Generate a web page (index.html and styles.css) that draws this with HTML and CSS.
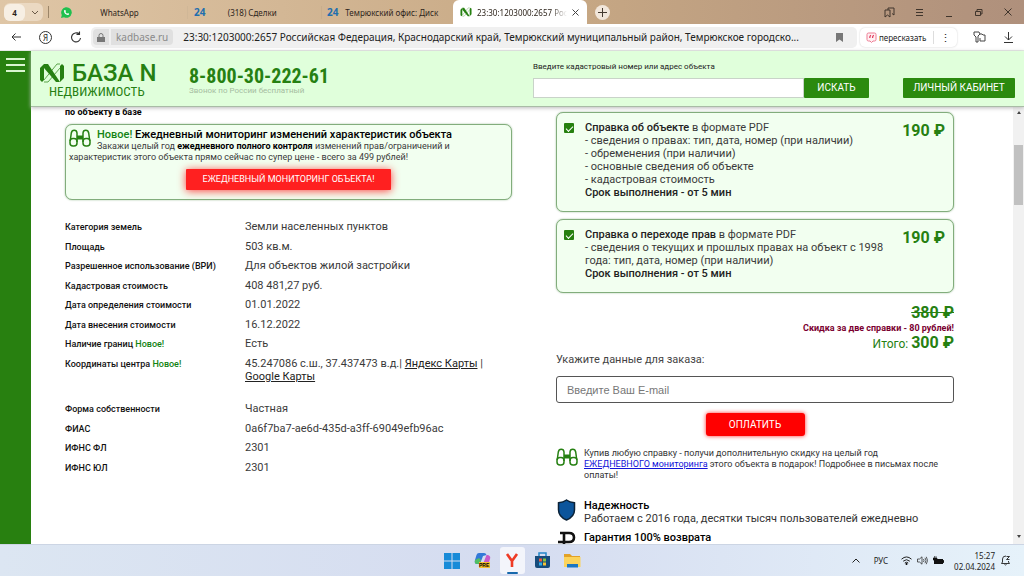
FILE: index.html
```html
<!DOCTYPE html>
<html lang="ru">
<head>
<meta charset="utf-8">
<title>23:30:1203000:2657</title>
<link rel="stylesheet" href="styles.css">
</head>
<body>
<svg width="0" height="0" class="defs" aria-hidden="true">
  <symbol id="binoculars" viewBox="0 0 22 18">
    <g fill="none" stroke="#268012" stroke-width="1.500">
      <path d="M1.200 12L2.300 4Q2.800 1.200 5.200 1.200Q7.800 1.200 8 4V13M20.800 12L19.700 4Q19.200 1.200 16.800 1.200Q14.200 1.200 14 4V13"/>
      <rect x="1" y="9.500" width="7" height="7.500" rx="3"/><rect x="14" y="9.500" width="7" height="7.500" rx="3"/>
    </g>
    <path d="M8 6.500h6v4H8z" fill="#268012"/>
  </symbol>
  <symbol id="mark" viewBox="0 0 26 20">
    <path d="M1 5L5 1v16l-2 2-2-2zM25 15l-4 4V3l2-2 2 2z" fill="#268012"/>
    <path d="M5 1h4l12 18h-4L5 5z" fill="#268012"/>
    <path d="M5 17L18 1h3M9 19L21 5M5 19h4" stroke="#268012" fill="none" stroke-width=".7"/>
  </symbol>
</svg>

<nav class="tabs">
  <div class="group"><span class="count">4</span><svg width="8" height="5" viewBox="0 0 8 5"><path d="M1 1l3 3 3-3" fill="none" stroke="#6a5a48"/></svg></div>
  <span class="bar"></span>
  <div class="tab tab-wa">
    <svg width="11" height="11" viewBox="0 0 11 11"><path d="M0 11l.8-3A5.300 5.300 0 1 1 3 10.200z" fill="#1fc04f"/><path d="M3.400 3l1 .1.500 1.300-.5.600q.6 1.200 1.800 1.700l.7-.7 1.200.7q0 1.200-1.300 1.300Q3.200 7.300 3 4z" fill="#fff"/></svg>
    <span class="name">WhatsApp</span>
  </div>
  <div class="tab tab-deals"><b class="b24">24</b><span class="name">(318) Сделки</span></div>
  <div class="tab tab-office"><b class="b24">24</b><span class="name">Темрюкский офис: Диск</span></div>
  <div class="tab active">
    <svg width="12" height="10"><use href="#mark"/></svg>
    <span class="title">23:30:1203000:2657 Росс</span>
    <svg width="7" height="7" viewBox="0 0 7 7"><path d="M.5.5l6 6m0-6l-6 6" stroke="#444"/></svg>
  </div>
  <button class="plus" aria-label="Новая вкладка"><svg width="9" height="9" viewBox="0 0 9 9"><path d="M4.500 0v9M0 4.500h9" stroke="#443a30"/></svg></button>
  <div class="win">
    <svg width="11" height="11" viewBox="0 0 11 11"><path d="M1 3h5v7L3.500 8 1 10zM4 3V1h6v7L8 6.500" fill="none" stroke="#40352c"/></svg>
    <svg width="8" height="9" viewBox="0 0 8 9"><path d="M0 1.500h7M0 4.500h7M0 7.500h7" stroke="#40352c"/></svg>
    <svg width="8" height="9" viewBox="0 0 8 9"><path d="M1 8.500h6" stroke="#40352c"/></svg>
    <svg width="9" height="9" viewBox="0 0 9 9"><path d="M1.500 3.500h5v4h-5zM3 3V1.500h5V6H7" fill="none" stroke="#40352c"/></svg>
    <svg width="8" height="8" viewBox="0 0 8 8"><path d="M.5.5l7 7m0-7l-7 7" stroke="#40352c"/></svg>
  </div>
</nav>

<div class="toolbar">
  <div class="navs">
    <svg width="10" height="8" viewBox="0 0 10 8"><path d="M10 4H1M4.500.5L1 4l3.500 3.500" fill="none" stroke="#333"/></svg>
    <span class="ya">Я</span>
    <svg width="12" height="12" viewBox="0 0 12 12"><path d="M10.500 7A4.500 4.500 0 1 1 9 3L7.500 1.500M9.500.5v3h-3" fill="none" stroke="#333" stroke-width="1.100"/></svg>
  </div>
  <div class="address">
    <span class="lock"><svg width="8" height="9" viewBox="0 0 8 9"><path d="M0 4h8v5H0z" fill="#777"/><path d="M2 4V2.500a2 2 0 0 1 4 0V4" fill="none" stroke="#777"/></svg></span>
    <span class="host">kadbase.ru</span>
    <span class="url">23:30:1203000:2657 Российская Федерация, Краснодарский край, Темрюкский муниципальный район, Темрюкское городско...</span>
    <svg width="7" height="9" viewBox="0 0 7 9"><path d="M0 0h7v9L3.500 6.500 0 9z" fill="#777"/></svg>
  </div>
  <button class="retell"><svg width="11" height="11" viewBox="0 0 11 11"><path d="M2.500 1h6Q10 1 10 2.500v5Q10 9 8.500 9H7l-1.500 1.500L4 9H2.500Q1 9 1 7.500v-5Q1 1 2.500 1z" fill="#fff0f3" stroke="#ee7d94"/><path d="M5 3.200Q3.600 4 3.800 6M7.800 3.200Q6.400 4 6.600 6" stroke="#df3355" stroke-width="1.200" fill="none"/></svg>пересказать<span class="dots">⋮</span></button>
  <div class="tools">
    <svg width="13" height="12" viewBox="0 0 13 12"><path d="M1 1h5l1 2-2 2v6H3V6L1 4zM7 3h2l1 1h2v6H7V7" fill="none" stroke="#444"/></svg>
    <svg width="9" height="11" viewBox="0 0 9 11"><path d="M4.500 0v8M1 4.500L4.500 8 8 4.500M0 10.500h9" fill="none" stroke="#333"/></svg>
  </div>
</div>

<div class="page">
  <aside class="side"><button class="burger" aria-label="Меню"><i></i><i></i><i></i></button></aside>
  <div class="site">
    <header class="header">
      <a class="logo" href="#"><span class="brand"><svg width="26" height="20"><use href="#mark"/></svg>БАЗА N</span><span class="sub">НЕДВИЖИМОСТЬ</span></a>
      <div class="phone"><strong>8-800-30-222-61</strong><small>Звонок по России бесплатный</small></div>
      <form class="search">
        <label for="q">Введите кадастровый номер или адрес объекта</label>
        <div class="search-row"><input id="q" type="text"><button type="button" class="green find">ИСКАТЬ</button></div>
      </form>
      <button class="green cabinet">ЛИЧНЫЙ КАБИНЕТ</button>
    </header>
    <div class="body">
      <main class="content">
        <section class="left">
          <p class="lead">по объекту в базе</p>
          <div class="card promo">
            <svg class="bino" width="22" height="18"><use href="#binoculars"/></svg>
            <h2><span class="new">Новое!</span> Ежедневный мониторинг изменений характеристик объекта</h2>
            <p>Закажи целый год <b>ежедневного полного контроля</b> изменений прав/ограничений и характеристик этого объекта прямо сейчас по супер цене - всего за 499 рублей!</p>
            <button class="red monitor">ЕЖЕДНЕВНЫЙ МОНИТОРИНГ ОБЪЕКТА!</button>
          </div>
          <table class="facts">
            <tr><th>Категория земель</th><td>Земли населенных пунктов</td></tr>
            <tr><th>Площадь</th><td>503 кв.м.</td></tr>
            <tr><th>Разрешенное использование (ВРИ)</th><td>Для объектов жилой застройки</td></tr>
            <tr><th>Кадастровая стоимость</th><td>408 481,27 руб.</td></tr>
            <tr><th>Дата определения стоимости</th><td>01.01.2022</td></tr>
            <tr><th>Дата внесения стоимости</th><td>16.12.2022</td></tr>
            <tr><th>Наличие границ <span class="new">Новое!</span></th><td>Есть</td></tr>
            <tr><th>Координаты центра <span class="new">Новое!</span></th><td>45.247086 с.ш., 37.437473 в.д.| <a href="#">Яндекс Карты</a> |<br><a href="#">Google Карты</a></td></tr>
          </table>
          <table class="facts">
            <tr><th>Форма собственности</th><td>Частная</td></tr>
            <tr><th>ФИАС</th><td>0a6f7ba7-ae6d-435d-a3ff-69049efb96ac</td></tr>
            <tr><th>ИФНС ФЛ</th><td>2301</td></tr>
            <tr><th>ИФНС ЮЛ</th><td>2301</td></tr>
          </table>
        </section>
        <section class="right">
          <label class="card report">
            <input type="checkbox" checked>
            <span class="desc"><b>Справка об объекте</b> в формате PDF<br>- сведения о правах: тип, дата, номер (при наличии)<br>- обременения (при наличии)<br>- основные сведения об объекте<br>- кадастровая стоимость<br><b>Срок выполнения - от 5 мин</b></span>
            <span class="price">190 ₽</span>
          </label>
          <label class="card report">
            <input type="checkbox" checked>
            <span class="desc"><b>Справка о переходе прав</b> в формате PDF<br>- сведения о текущих и прошлых правах на объект с 1998 года: тип, дата, номер (при наличии)<br><b>Срок выполнения - от 5 мин</b></span>
            <span class="price">190 ₽</span>
          </label>
          <div class="total">
            <s>380 ₽</s>
            <span class="discount">Скидка за две справки - 80 рублей!</span>
            <span class="sum">Итого: <b>300 ₽</b></span>
          </div>
          <label class="order" for="mail">Укажите данные для заказа:</label>
          <input id="mail" class="mail" type="email" placeholder="Введите Ваш E-mail">
          <button class="red pay">ОПЛАТИТЬ</button>
          <div class="note gift">
            <svg width="22" height="18"><use href="#binoculars"/></svg>
            <p>Купив любую справку - получи дополнительную скидку на целый год<br><a href="#">ЕЖЕДНЕВНОГО мониторинга</a> этого объекта в подарок! Подробнее в письмах после<br>оплаты!</p>
          </div>
          <div class="note trust">
            <svg width="22" height="22" viewBox="0 0 22 22"><path d="M10.500 1q3 2.200 8 2.800v7q0 7-8 10.200-8-3.200-8-10.200v-7q5-.6 8-2.800z" fill="#0c559c" stroke="#0b2237" stroke-width="1.500"/></svg>
            <p><b>Надежность</b><br>Работаем с 2016 года, десятки тысяч пользователей ежедневно</p>
          </div>
          <div class="note refund">
            <svg width="22" height="20" viewBox="0 0 22 20"><path d="M4 2h9q5 0 5 4.500T13 11H2M8 2v17M2 15h11" fill="none" stroke="#111" stroke-width="2.600"/></svg>
            <p><b>Гарантия 100% возврата</b></p>
          </div>
        </section>
      </main>
      <div class="scroll"><span class="up"></span><span class="thumb"></span><span class="down"></span></div>
    </div>
  </div>
</div>

<footer class="taskbar">
  <span></span>
  <div class="apps">
    <span class="app"><svg width="16" height="16" viewBox="0 0 16 16"><path d="M0 0h7.500v7.500H0zM8.500 0H16v7.500H8.500zM0 8.500h7.500V16H0zM8.500 8.500H16V16H8.500z" fill="#188bd8"/></svg></span>
    <span class="app"><svg width="17" height="17" viewBox="0 0 17 17"><path d="M5 1h5q2 0 2.500 2L9 4 6 12H3Q0 12 1 8l1.500-5Q3 1 5 1z" fill="#3379d8"/><path d="M1 8l4-2 2 2-1 4H3Q0 12 1 8z" fill="#51bd65"/><path d="M12.500 3H14q3 1 2 4l-1.500 5q-1 3-3.500 3H8q-2-1-2-3h3z" fill="#c95bc9"/><path d="M5 10h11v6H5z" fill="#f5bf2e"/><text x="5" y="15" class="pre">PRE</text></svg></span>
    <span class="app current"><svg width="14" height="15" viewBox="0 0 14 15"><path d="M2 1l5 7v6M12 1L7 8" fill="none" stroke="#ef3b25" stroke-width="2.600"/></svg></span>
    <span class="app"><svg width="17" height="17" viewBox="0 0 17 17"><path d="M5 4V1h7v3" fill="none" stroke="#2587c9" stroke-width="1.500"/><path d="M1 4h15v10q0 2-2 2H3q-2 0-2-2z" fill="#174c7c"/><path d="M5 6.500h3v3H5z" fill="#f05a3c"/><path d="M9 6.500h3v3H9z" fill="#86c440"/><path d="M5 10.500h3v3H5z" fill="#30aee8"/><path d="M9 10.500h3v3H9z" fill="#f8c332"/></svg></span>
    <span class="app"><svg width="17" height="15" viewBox="0 0 17 15"><path d="M0 1h6l2 2h8v4H0z" fill="#e2a126"/><path d="M0 4h16.500v10H0z" fill="#fbd35b"/><path d="M3 11h11v3.500H3z" fill="#1b76c2"/></svg></span>
  </div>
  <div class="tray">
    <svg width="8" height="5" viewBox="0 0 8 5"><path d="M.5 4.500L4 1l3.500 3.500" fill="none" stroke="#222"/></svg>
    <span class="lang">РУС</span>
    <span class="status">
      <svg width="11" height="9" viewBox="0 0 11 9"><path d="M.5 3.200q5-4.500 10 0M2.200 5.200q3.300-3 6.600 0M3.800 7q1.700-1.500 3.400 0" fill="none" stroke="#222"/><circle cx="5.500" cy="8" r="1"/></svg>
      <svg width="11" height="9" viewBox="0 0 11 9"><path d="M.5 3h2L5 .8v7.400L2.500 6h-2zM6.500 3q1 1.500 0 3M8 1.800q2 2.700 0 5.400M9.300.8q2.500 3.700 0 7.400" fill="none" stroke="#333" stroke-width=".8"/></svg>
      <svg width="11" height="9" viewBox="0 0 11 9"><path d="M1 3h9v5H1z" fill="#111"/><path d="M10 4.500h1v2h-1zM0 2h4v2H0zM1.500 0v2M3 0v2" fill="#111" stroke="#111" stroke-width=".6"/></svg>
    </span>
    <time class="clock">15:27<br>02.04.2024</time>
    <svg width="10" height="11" viewBox="0 0 10 11"><path d="M.5 8.500L1.500 7V4q0-3 3.500-3M.5 8.500h8L7.500 7V6M3.500 9.500q1 1 2 0M5.500 1.500h3l-3 3h3" fill="none" stroke="#222" stroke-width=".9"/></svg>
  </div>
</footer>
</body>
</html>
```
FILE: styles.css
```css
* { box-sizing: border-box; }
body { margin: 0; height: 100vh; display: flex; flex-direction: column; overflow: hidden; font-family: Roboto, "Liberation Sans", sans-serif; font-size: 11px; line-height: 13px; color: #3a3a3a; background: #fff; }
button, input { font: inherit; margin: 0; }
button { border: 0; padding: 0; cursor: pointer; }
p, h2 { margin: 0; }
svg { flex: none; display: block; }
b, strong { font-weight: 700; }
.defs { position: absolute; }

/* browser tabs */
.tabs { flex: none; height: 24px; display: flex; align-items: center; background: linear-gradient(90deg, #dfc6a6, #c7a884 55%, #af907c); font-family: "Noto Sans", sans-serif; font-size: 8px; color: #2e251c; }
.group { display: flex; align-items: center; gap: 6px; margin-left: 4px; width: 39px; height: 18px; border-radius: 6px; background: #ebd9c2; }
.count { width: 21px; height: 17px; line-height: 17px; text-align: center; border-radius: 6px; background: #f7efe4; font-weight: 700; }
.bar { width: 1px; height: 12px; margin-left: 5px; background: #9b8568; }
.tab { display: flex; align-items: center; }
.tab .name { flex: 1; text-align: center; }
.tab-wa { width: 138px; padding-left: 12px; }
.tab-wa .name { padding-right: 20px; }
.tab-deals { width: 134px; padding-left: 6px; border-left: 1px solid #d0b797; }
.tab-deals .name { padding-right: 22px; }
.tab-office { width: 132px; padding: 0 8px 0 5px; border-left: 1px solid #c9ae8c; }
.b24 { font-size: 10px; color: #1f6eae; }
.active { align-self: stretch; width: 134px; padding: 0 8px 0 7px; gap: 5px; background: #fff; border-radius: 6px 6px 0 0; }
.title { flex: 1; overflow: hidden; white-space: nowrap; -webkit-mask-image: linear-gradient(90deg, #000 82%, transparent); mask-image: linear-gradient(90deg, #000 82%, transparent); }
.plus { display: grid; place-items: center; width: 15px; height: 15px; margin-left: 8px; border-radius: 50%; background: #f1e6da; }
.win { display: flex; align-items: center; gap: 21px; margin-left: auto; padding-right: 12px; }

/* browser toolbar */
.toolbar { flex: none; height: 27px; display: flex; align-items: center; background: #fff; border-bottom: 1px solid #e6e8e6; font-family: "Noto Sans", sans-serif; }
.navs { display: flex; align-items: center; width: 91px; padding-left: 11px; gap: 18px; }
.ya { width: 13px; height: 13px; border: 1px solid #333; border-radius: 50%; font-size: 8px; line-height: 11px; text-align: center; color: #222; }
.address { flex: 1; min-width: 0; height: 21px; display: flex; align-items: center; padding: 0 14px 0 2px; background: #f0f0f0; border-radius: 5px; }
.lock { display: grid; place-items: center; width: 16px; height: 16px; background: #e0e0e0; border-radius: 4px 0 0 4px; }
.host { height: 16px; line-height: 16px; margin-left: 2px; padding: 0 5px; background: #e0e0e0; border-radius: 0 4px 4px 0; font-size: 10px; color: #8a8a8a; }
.url { flex: 1; min-width: 0; margin-left: 10px; white-space: nowrap; overflow: hidden; font-size: 10px; color: #222; }
.retell { display: flex; align-items: center; gap: 2px; width: 97px; height: 19px; margin-left: 3px; padding-left: 6px; border-radius: 5px; background: #fff; box-shadow: 0 0 2px #ccc; font-size: 8px; color: #222; }
.dots { margin-left: 5px; padding-left: 6px; border-left: 1px solid #ddd; font-size: 11px; }
.tools { display: flex; align-items: center; gap: 18px; padding: 0 11px 0 16px; }

/* site shell */
.page { flex: 1; min-height: 0; display: flex; }
.side { flex: none; width: 31px; background: #288010; padding: 7px 6px; }
.burger { display: flex; flex-direction: column; gap: 4px; width: 19px; background: none; }
.burger i { height: 2px; background: #d9f5d0; }
.site { flex: 1; min-width: 0; display: flex; flex-direction: column; }
.header { position: relative; flex: none; height: 56px; display: flex; align-items: flex-start; background: #e0ffdb; border-bottom: 1px solid #a9bca6; box-shadow: 0 1px 4px #bbb; }
.logo { width: 158px; padding: 11px 0 0 8px; color: #268012; text-decoration: none; }
.brand { display: flex; align-items: center; gap: 7px; font-size: 24px; line-height: 22px; font-weight: 500; white-space: nowrap; }
.sub { display: block; padding-left: 10px; font: 13px/15px "Roboto Condensed", "Liberation Sans Narrow", Roboto, sans-serif; }
.phone { display: flex; flex-direction: column; padding-top: 14px; }
.phone strong { font: 700 20px/22px "Roboto Condensed", "Liberation Sans Narrow", Roboto, sans-serif; color: #268012; }
.phone small { font-size: 8px; line-height: 8px; color: #a5bca1; }
.search { display: flex; flex-direction: column; width: 336px; margin-left: auto; padding-top: 9px; font-size: 8px; color: #222; }
.search-row { display: flex; margin-top: 5px; }
.search-row input { flex: 1; min-width: 0; height: 20px; border: 1px solid #c9d3c9; background: #fff; }
.green { height: 20px; background: #2b8a0e; color: #fff; font-size: 10px; line-height: 20px; border-radius: 1px; }
.find { width: 65px; }
.cabinet { width: 112px; margin: 27px 9px 0 34px; }
.body { flex: 1; min-height: 0; display: flex; }
.content { flex: 1; min-width: 0; display: grid; grid-template-columns: 447fr 398fr; gap: 44px; padding: 0 59px 0 34px; overflow: hidden; }

.card { border: 1px solid #82ad7c; border-radius: 7px; background: #f2fff0; box-shadow: 0 0 2px #9cbd98; }
.new { color: #128312; }

/* left column */
.lead { font-size: 9px; line-height: 10px; font-weight: 700; color: #000; }
.promo { margin-top: 7px; padding: 3px 3px 9px; font-size: 9px; line-height: 11px; min-height: 76px; }
.bino { float: left; margin: 1px 6px 0 0; }
.promo h2 { font-size: 11px; line-height: 13px; font-weight: 500; color: #000; }
.promo b { color: #000; }
.red { display: block; margin: 0 auto; background: #ff2020; color: #fff; }
.monitor { width: 205px; height: 21px; margin-top: 6px; font-size: 9px; border-radius: 1px; box-shadow: 0 1px 8px #ff4040; }
.facts { width: 100%; border-collapse: collapse; }
.facts th { width: 180px; padding: 0 0 6px; text-align: left; vertical-align: top; font-size: 9px; line-height: 14px; font-weight: 500; color: #111; }
.facts td { padding: 0 0 6px; vertical-align: top; font-size: 11px; line-height: 13px; }
.facts tr:nth-child(even) :is(th, td) { padding-bottom: 5px; }
.facts a { color: #222; }
.promo + .facts { margin-top: 20px; }
.facts + .facts { margin-top: 14px; }

/* right column */
.right { display: flex; flex-direction: column; padding-top: 5px; }
.report { display: flex; align-items: flex-start; padding: 8px 8px 12px 7px; }
.report + .report { margin-top: 7px; }
.report input { appearance: none; flex: none; width: 10px; height: 10px; margin-top: 2px; border-radius: 1px; background: #26800f; display: grid; place-items: center; }
.report input::after { content: ""; width: 6px; height: 3px; border: solid #fff; border-width: 0 0 1px 1px; transform: rotate(-45deg); }
.desc { flex: 1; margin-left: 11px; padding-right: 16px; }
.desc b { color: #222; font-weight: 500; }
.price { margin-top: 2px; font-size: 16px; line-height: 16px; font-weight: 700; color: #268012; white-space: nowrap; }
.total { display: flex; flex-direction: column; align-items: flex-end; margin-top: 12px; color: #268012; }
.total s, .sum b { font-size: 16px; line-height: 16px; font-weight: 700; }
.discount { font-size: 9px; line-height: 14px; font-weight: 700; color: #7a0030; }
.sum { font-size: 12px; line-height: 16px; }
.order { font-size: 11px; line-height: 16px; color: #444; }
.mail { width: 100%; height: 27px; margin-top: 8px; padding: 0 10px; border: 1px solid #555; border-radius: 3px; background: #fff; font-family: "Liberation Sans", sans-serif; font-size: 11px; }
.mail::placeholder { color: #777; }
.pay { width: 99px; height: 23px; margin-top: 10px; background: #f00; border-radius: 3px; box-shadow: 0 0 4px #ff3030; font-size: 10px; }
.note { display: flex; gap: 6px; color: #333; }
.note b { color: #000; font-weight: 500; }
.gift { margin-top: 12px; font-size: 9px; line-height: 11px; }
.gift a { color: #1212d8; }
.trust { margin-top: 18px; }
.refund { margin-top: 6px; }

.scroll { flex: none; width: 11px; display: flex; flex-direction: column; align-items: center; background: #f1f1f1; }
.up, .down { border: solid transparent; border-width: 0 2px; }
.up { margin-top: 4px; border-bottom: 3px solid #444; }
.thumb { width: 9px; height: 60px; margin-top: 31px; background: #c1c1c1; }
.down { margin: auto 0 6px; border-top: 3px solid #444; }

/* taskbar */
.taskbar { flex: none; height: 32px; display: grid; grid-template-columns: 1fr auto 1fr; align-items: center; background: linear-gradient(90deg, #dce6f2, #d5dcf0 50%, #e6f2fa); border-top: 1px solid #ccd5e4; font-family: "Noto Sans", sans-serif; font-size: 8px; color: #222; }
.apps { display: flex; gap: 5px; }
.app { width: 25px; height: 27px; display: grid; place-items: center; }
.current { position: relative; background: #f3f5fb; border-radius: 3px; }
.current::after { content: ""; position: absolute; bottom: 0; left: 7px; right: 7px; height: 2px; border-radius: 1px; background: #1768ac; }
.pre { font: 700 5px "Liberation Sans", sans-serif; }
.tray { justify-self: end; display: flex; align-items: center; padding-right: 13px; }
.lang { margin-left: 14px; font-size: 8px; }
.status { display: flex; gap: 5px; margin: 0 10px 0 13px; }
.clock { margin-right: 6px; text-align: right; line-height: 11px; }
```
